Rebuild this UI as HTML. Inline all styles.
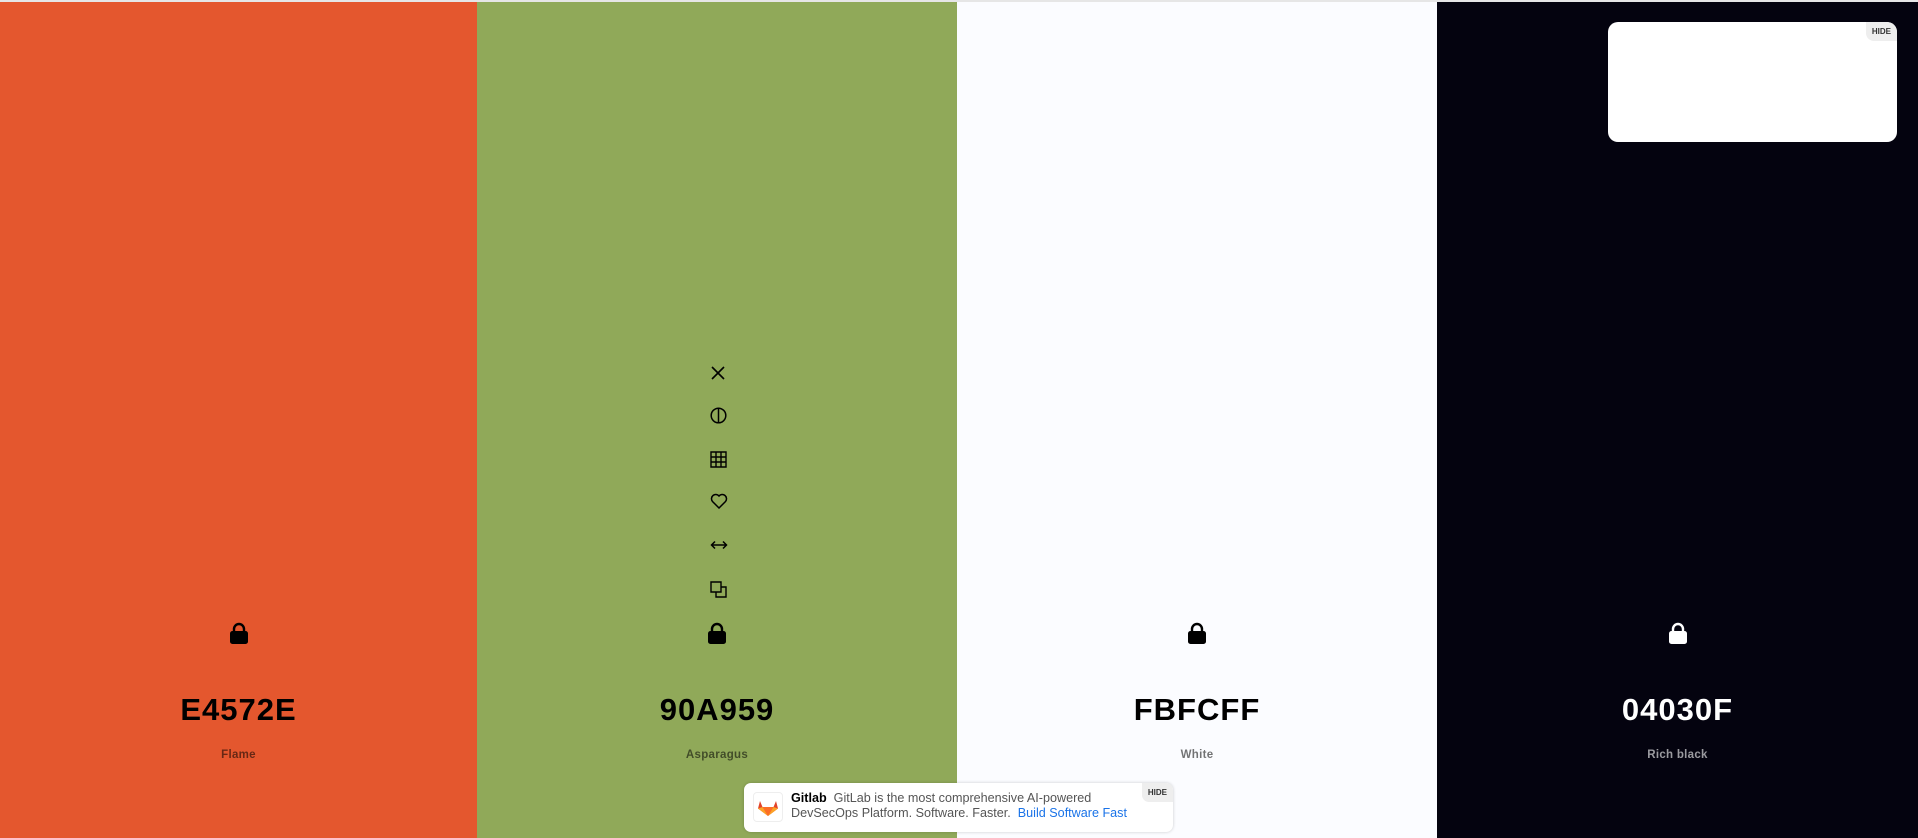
<!DOCTYPE html>
<html><head><meta charset="utf-8"><style>
*{margin:0;padding:0;box-sizing:border-box}
body{width:1918px;height:838px;overflow:hidden;font-family:"Liberation Sans",sans-serif;position:relative;background:#fff}
.col{position:absolute;top:2px;height:836px}
.lock{position:absolute;left:50%;top:620px;transform:translateX(-50%)}
.hex{position:absolute;width:100%;text-align:center;top:690px;font-size:31px;font-weight:bold;letter-spacing:1px}
.name{position:absolute;width:100%;text-align:center;top:747px;font-size:11.5px;font-weight:bold;letter-spacing:.3px}
.ic{position:absolute;left:710px}
</style></head><body>
<div style="position:absolute;top:0;left:0;width:1918px;height:2px;background:#e6e6e6"></div>
<div class="col" style="left:0;width:477px;background:#E4572E">
<svg class="lock" width="20" height="22" viewBox="0 0 20 22"><path d="M5 10V7a5 5 0 0 1 10 0v3" fill="none" stroke="#000" stroke-width="2.4"/><rect x="1" y="9" width="18" height="13" rx="2.5" fill="#000"/></svg>
<div class="hex" style="color:#000">E4572E</div><div class="name" style="color:rgba(0,0,0,.55)">Flame</div></div>
<div class="col" style="left:477px;width:480px;background:#90A959">
<svg class="lock" width="20" height="22" viewBox="0 0 20 22"><path d="M5 10V7a5 5 0 0 1 10 0v3" fill="none" stroke="#000" stroke-width="2.4"/><rect x="1" y="9" width="18" height="13" rx="2.5" fill="#000"/></svg>
<div class="hex" style="color:#000">90A959</div><div class="name" style="color:rgba(0,0,0,.55)">Asparagus</div></div>
<div class="col" style="left:957px;width:480px;background:#FBFCFF">
<svg class="lock" width="20" height="22" viewBox="0 0 20 22"><path d="M5 10V7a5 5 0 0 1 10 0v3" fill="none" stroke="#000" stroke-width="2.4"/><rect x="1" y="9" width="18" height="13" rx="2.5" fill="#000"/></svg>
<div class="hex" style="color:#000">FBFCFF</div><div class="name" style="color:rgba(0,0,0,.55)">White</div></div>
<div class="col" style="left:1437px;width:481px;background:#04030F">
<svg class="lock" width="20" height="22" viewBox="0 0 20 22"><path d="M5 10V7a5 5 0 0 1 10 0v3" fill="none" stroke="#fff" stroke-width="2.4"/><rect x="1" y="9" width="18" height="13" rx="2.5" fill="#fff"/></svg>
<div class="hex" style="color:#fff">04030F</div><div class="name" style="color:rgba(255,255,255,.6)">Rich black</div></div>

<svg class="ic" style="top:365px" width="16" height="16" viewBox="0 0 16 16"><path d="M2 2L14 14M14 2L2 14" stroke="#000" stroke-width="1.6"/></svg>
<svg class="ic" style="top:407px" width="17" height="17" viewBox="0 0 17 17"><circle cx="8.5" cy="8.5" r="7.3" fill="none" stroke="#000" stroke-width="1.5"/><path d="M8.5 1v15" stroke="#000" stroke-width="1.5"/></svg>
<svg class="ic" style="top:451px" width="17" height="17" viewBox="0 0 17 17"><path d="M1 1h15v15H1zM6 1v15M11 1v15M1 6h15M1 11h15" fill="none" stroke="#000" stroke-width="1.4"/></svg>
<svg class="ic" style="top:493px" width="18" height="16" viewBox="0 0 18 16"><path d="M9 15L2.5 8.5A3.8 3.8 0 0 1 9 3a3.8 3.8 0 0 1 6.5 5.5z" fill="none" stroke="#000" stroke-width="1.5"/></svg>
<svg class="ic" style="top:538px" width="18" height="14" viewBox="0 0 18 14"><path d="M1.5 7h15M5 3.5L1.5 7 5 10.5M13 3.5l3.5 3.5L13 10.5" fill="none" stroke="#000" stroke-width="1.5"/></svg>
<svg class="ic" style="top:581px" width="17" height="17" viewBox="0 0 17 17"><path d="M1 1h10v10H1zM6 11v5h10V6h-5" fill="none" stroke="#000" stroke-width="1.4"/></svg>

<div style="position:absolute;left:1608px;top:22px;width:289px;height:120px;background:#fff;border-radius:10px">
<div style="position:absolute;right:0;top:0;background:#eee;border-radius:0 10px 0 8px;font-size:8px;font-weight:bold;color:#333;padding:5px 6px">HIDE</div></div>

<div style="position:absolute;left:744px;top:783px;width:429px;height:49px;background:#fff;border-radius:7px;box-shadow:0 0 3px rgba(0,0,0,.2)">
<div style="position:absolute;left:9px;top:9px;width:30px;height:30px;border:1px solid #eee;border-radius:4px">
<svg width="28" height="28" viewBox="0 0 28 28"><path d="M14 23L4 15.5 6 8l2.5 6h11L22 8l2 7.5z" fill="#e24329"/><path d="M14 23l-5.5-9h11z" fill="#fc6d26"/><path d="M4 15.5l4.5-1.5L14 23z M24 15.5l-4.5-1.5L14 23z" fill="#fca326"/></svg></div>
<div style="position:absolute;left:47px;top:8px;font-size:12.6px;line-height:15px;color:#555;width:360px"><b style="color:#000">Gitlab</b>&nbsp; GitLab is the most comprehensive AI-powered DevSecOps Platform. Software. Faster.&nbsp; <span style="color:#1a73e8">Build Software Fast</span></div>
<div style="position:absolute;right:0;top:0;background:#eee;border-radius:0 7px 0 7px;font-size:8px;font-weight:bold;color:#333;padding:5px 6px">HIDE</div></div>
</body></html>
